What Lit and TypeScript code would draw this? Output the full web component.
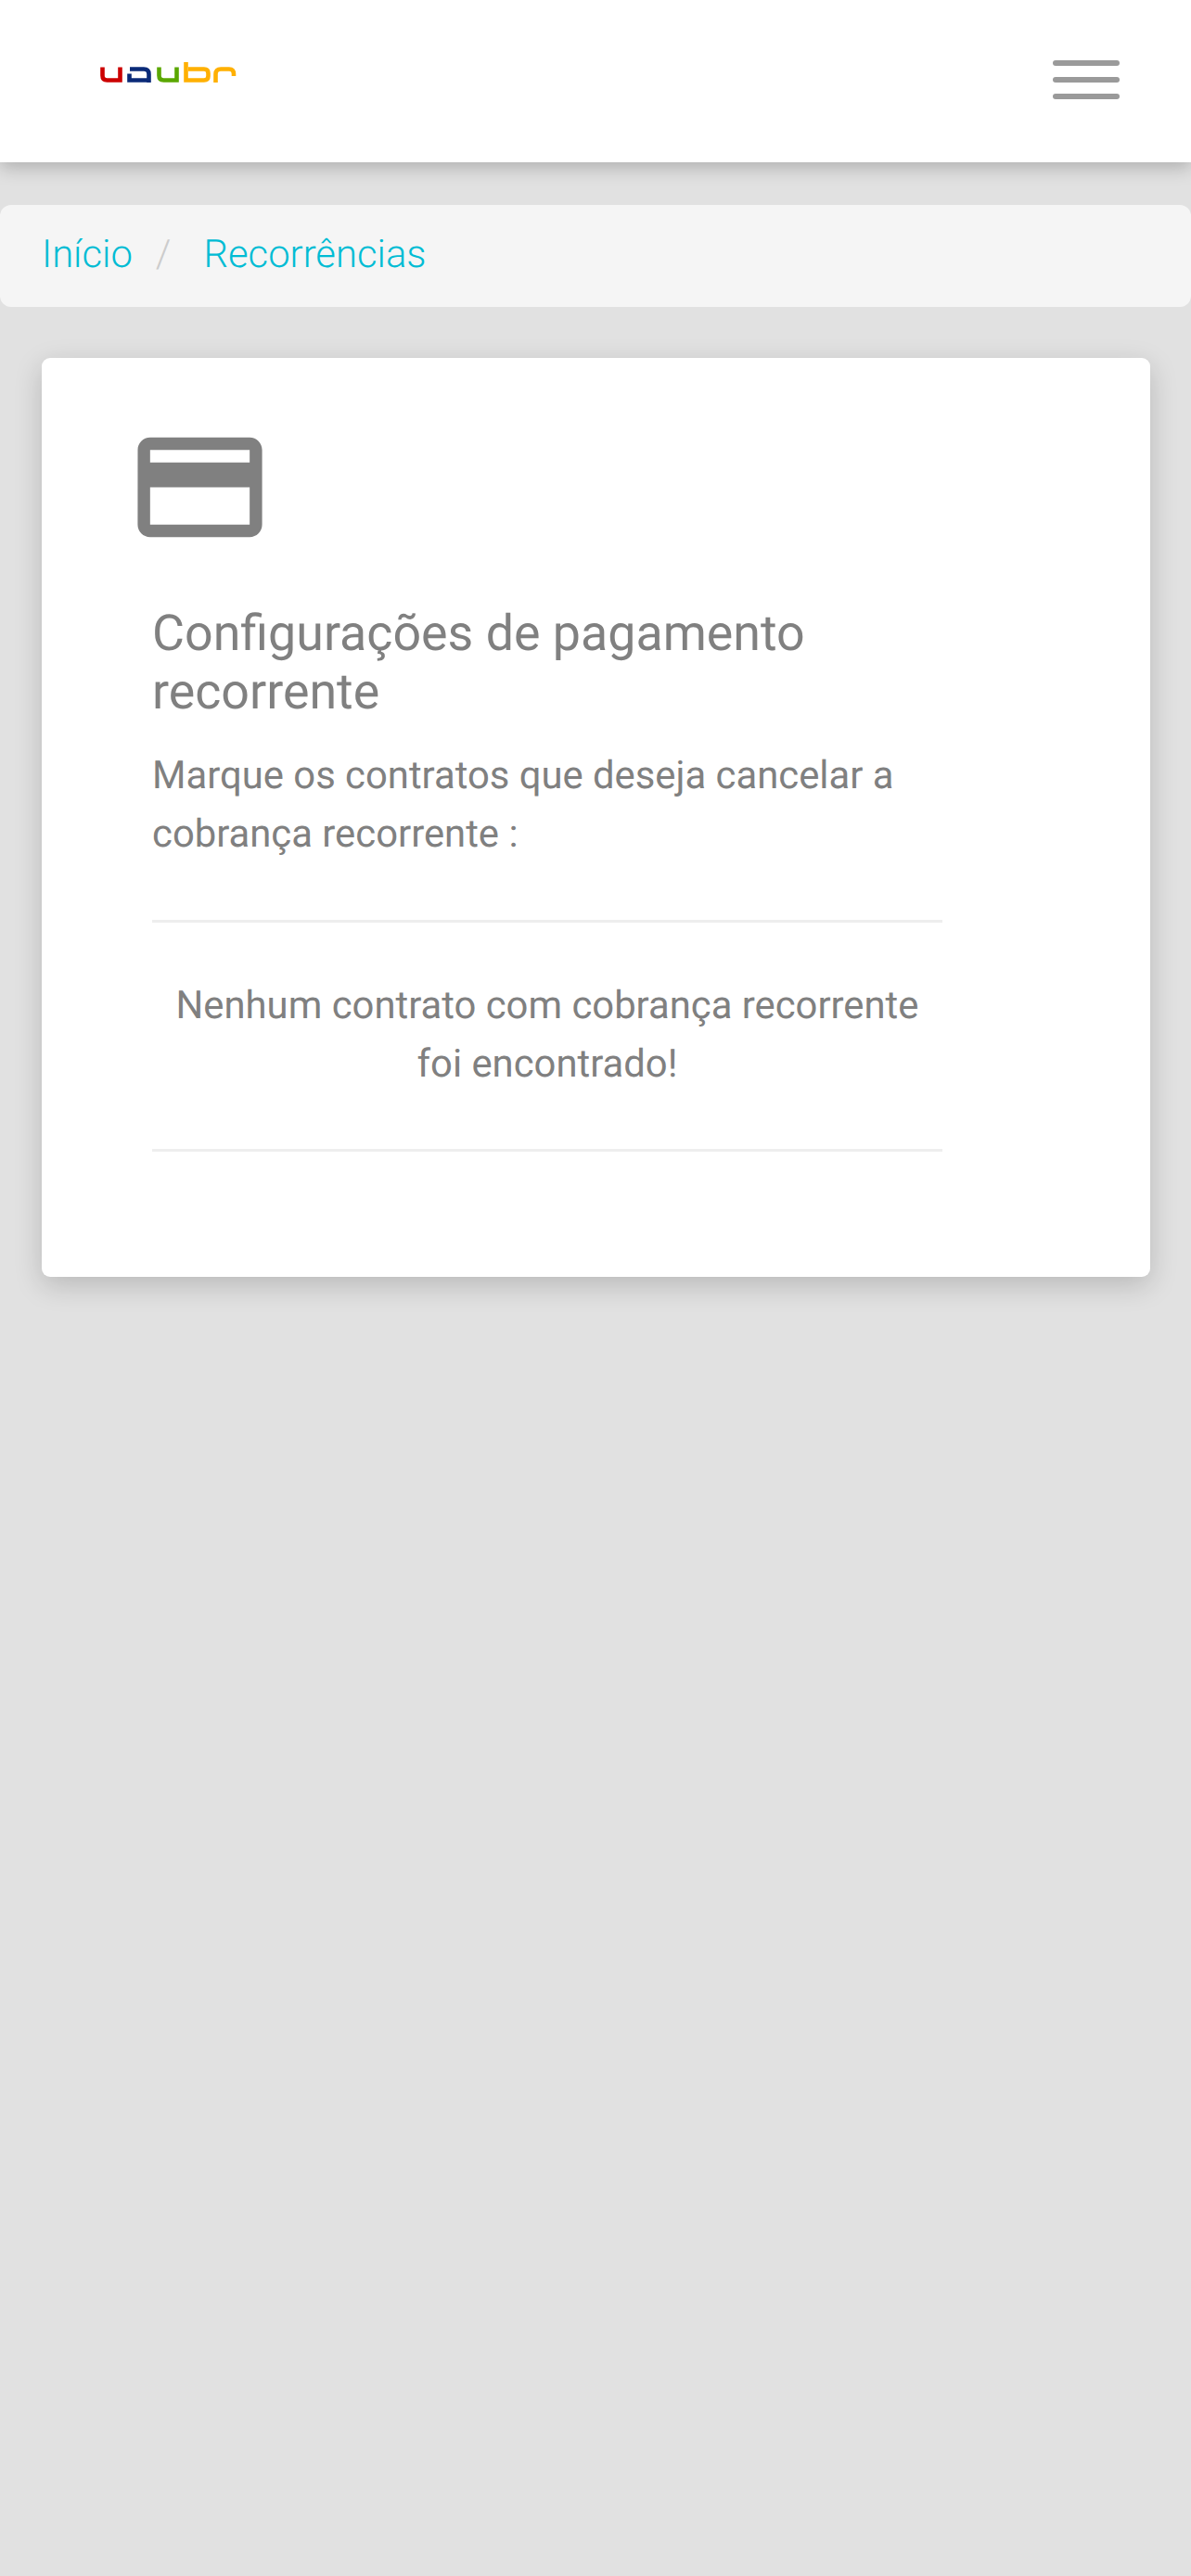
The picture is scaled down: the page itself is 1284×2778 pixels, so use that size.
import { LitElement, html, css } from "lit";
import { customElement } from "lit/decorators.js";

@customElement("app-root")
export class AppRoot extends LitElement {
  static styles = css`
    :host {
      display: block;
      width: 1284px;
      height: 2778px;
      background: #e1e1e1;
      font-family: Roboto, "Liberation Sans", sans-serif;
      text-rendering: geometricPrecision;
      overflow: hidden;
    }
    .header {
      height: 175px;
      background: #fff;
      box-shadow: 0 6px 18px rgba(0, 0, 0, 0.22);
      display: flex;
      justify-content: space-between;
      position: relative;
      padding: 0 77px 0 107px;
      box-sizing: border-box;
    }
    .logo {
      width: 148px;
      height: 23px;
      margin-top: 67px;
      display: block;
      filter: blur(0.5px);
    }
    .burger {
      display: flex;
      flex-direction: column;
      gap: 12px;
      width: 72px;
      margin-top: 65px;
    }
    .burger span {
      display: block;
      height: 6px;
      border-radius: 3px;
      background: #9a9a9a;
    }
    .crumbs {
      margin-top: 46px;
      height: 110px;
      background: #f5f5f5;
      border-radius: 12px;
      display: flex;
      align-items: center;
      padding: 0 45px 3px;
      font-size: 41.8px;
      font-weight: 300;
      color: #00bcd4;
      box-sizing: border-box;
    }
    .sep {
      color: #ccc;
      padding: 0 35px 0 25px;
    }
    .card {
      margin: 55px 44px 0 45px;
      height: 991px;
      box-sizing: border-box;
      background: #fff;
      border-radius: 9px;
      box-shadow: 0 9px 30px rgba(0, 0, 0, 0.18);
      padding: 59px 0 0 90px;
    }
    .icon {
      display: block;
      width: 161px;
      height: 161px;
      fill: #808080;
    }
    .body {
      width: 852px;
      margin: 46px 0 0 29px;
      color: #808080;
    }
    h1 {
      margin: 0;
      font-size: 53.75px;
      font-weight: 400;
      line-height: 63px;
    }
    p {
      margin: 0;
      font-size: 41.8px;
      line-height: 63px;
    }
    .sub {
      margin-top: 27px;
    }
    .rule {
      height: 3px;
      background: #eee;
    }
    .rule.a {
      margin-top: 61px;
    }
    .msg {
      padding: 58px 0 60px;
      text-align: center;
    }
  `;

  render() {
    return html`
      <div class="header">
        <svg class="logo" viewBox="0 -3 148 23" fill="none" stroke-width="4.6" aria-label="uaubr">
          <path d="M3.500 2.500V11.500Q3.500 16.500 8.500 16.500H22.500V2.500" stroke="#cc0000" />
          <path d="M33 4.500H48Q53.500 4.500 53.500 10V19M53 16.500H32.500V9.500" stroke="#0a2a78" />
          <path d="M64.500 2.500V11.500Q64.500 16.500 69.500 16.500H83.500V2.500" stroke="#5aa700" />
          <path d="M93.500 -3V16.500H113Q117.500 16.500 117.500 12V9Q117.500 4.500 113 4.500H96" stroke="#ffb000" />
          <path d="M125.500 19V10Q125.500 4.500 131 4.500H140Q145 4.500 145 10V12" stroke="#ffb000" />
        </svg>
        <div class="burger"><span></span><span></span><span></span></div>
      </div>
      <div class="crumbs">
        <span>Início</span><span class="sep">/</span><span>Recorrências</span>
      </div>
      <div class="card">
        <svg class="icon" viewBox="0 0 24 24">
          <path d="M20 4H4c-1.11 0-1.99.89-1.99 2L2 18c0 1.11.89 2 2 2h16c1.11 0 2-.89 2-2V6c0-1.11-.89-2-2-2zm0 14H4v-6h16v6zm0-10H4V6h16v2z" />
        </svg>
        <div class="body">
          <h1>Configurações de pagamento recorrente</h1>
          <p class="sub">Marque os contratos que deseja cancelar a cobrança recorrente :</p>
          <div class="rule a"></div>
          <p class="msg">Nenhum contrato com cobrança recorrente foi encontrado!</p>
          <div class="rule"></div>
        </div>
      </div>
    `;
  }
}
